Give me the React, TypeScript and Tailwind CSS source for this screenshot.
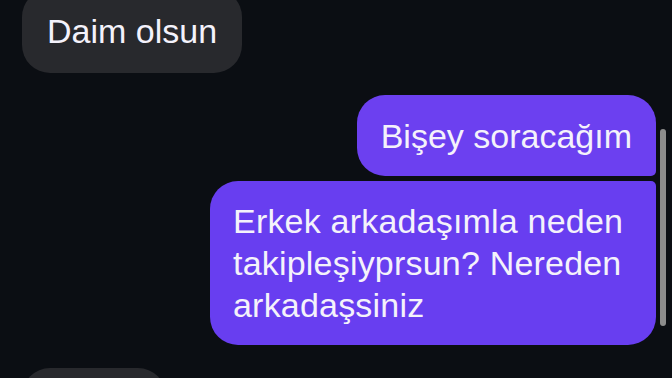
export default function App() {
  return (
    <div
      className="relative h-[378px] w-[672px] overflow-hidden bg-[#0b0e13] text-[#f4f2fb]"
      style={{ fontFamily: '"Liberation Sans", Arial, sans-serif' }}
    >
      <div className="flex flex-col pl-[22px] pr-[16px]">
        {/* incoming */}
        <div className="-mt-[11px] self-start rounded-[28px] bg-[#28292d] px-[25px] py-[21px] text-[34px] leading-[42px]">
          Daim olsun
        </div>

        {/* outgoing */}
        <div className="mt-[22px] self-end rounded-[28px] rounded-br-[5px] bg-[#6c40f0] px-[24px] py-[19.5px] text-[34px] leading-[42px]">
          Bişey soracağım
        </div>
        <div className="mt-[5px] w-[446px] self-end whitespace-pre-line rounded-[28px] rounded-tr-[5px] bg-[#683ef0] py-[19px] pl-[23px] pr-[20px] text-[34px] leading-[42px] tracking-[0.2px]">
          {"Erkek arkadaşımla neden\ntakipleşiyprsun? Nereden\narkadaşsiniz"}
        </div>

        {/* next incoming, cut off */}
        <div className="mt-[23px] h-[60px] w-[144px] self-start rounded-[28px] bg-[#28292d]" />
      </div>

      {/* scroll indicator */}
      <div className="absolute left-[660px] top-[129px] h-[197px] w-[6px] rounded-full bg-[#8c8c8c]" />
    </div>
  );
}
